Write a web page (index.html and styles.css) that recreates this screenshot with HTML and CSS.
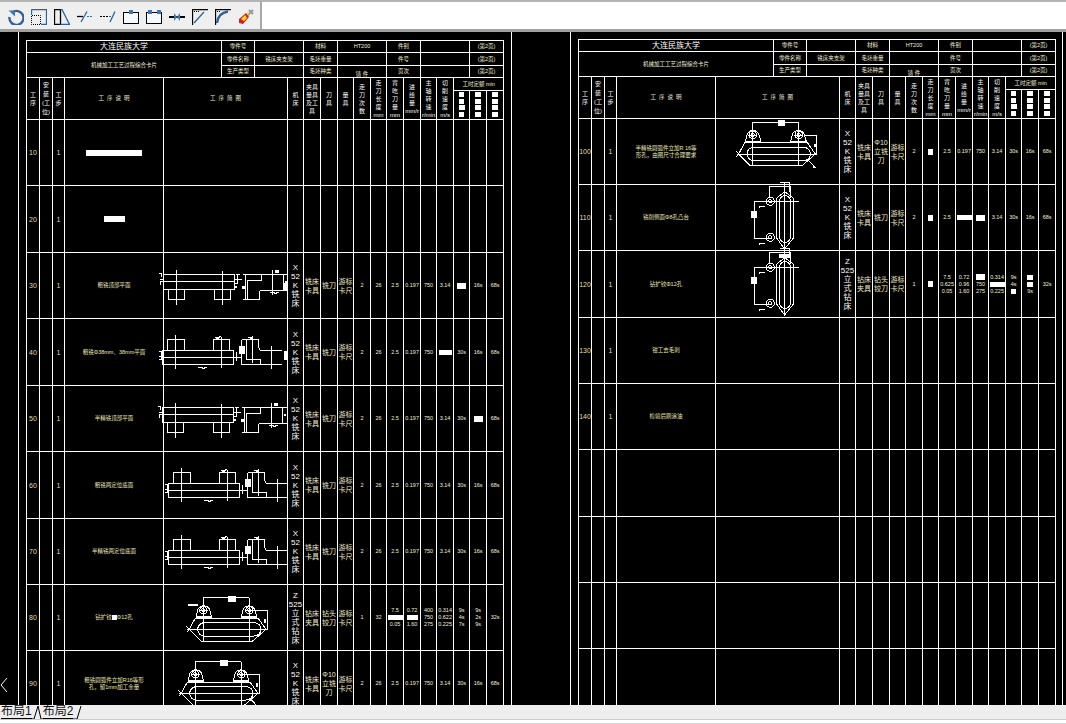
FILE: index.html
```html
<!DOCTYPE html>
<html lang="zh">
<head>
    <meta charset="UTF-8">
    <title>布局1</title>
    <link rel="stylesheet" href="styles.css">
</head>
<body>

    <!-- Shared drawings, in 1/3 px units local to a figure cell -->
    <svg class="defs" width="0" height="0">
        <defs>
            <g id="plan-low" class="part">
                <rect x="-6" y="64" width="215" height="46"/>
                <path d="M-6 85H209M9 110V140H59V110M148 110V140H197V110M34 52V155M172 55V155"/>
                <path d="M-18 62H-10V72M-14 95V84H-6M-14 80H-6M213 65H224M218 65V92H209M209 78H232"/>
                <path d="M241 64V140M234 64H371V112M234 140H284V115L288 112H371M246 82H288V64M246 82V140M322 50V125M354 64V112"/>
                <path d="M316 117H326L329 121H335V117H341"/>
                <rect class="solid" x="231" y="98" width="10" height="10"/>
                <rect class="solid" x="330" y="52" width="12" height="8"/>
                <rect class="solid" x="360" y="84" width="6" height="6"/>
                <rect class="solid" x="209" y="98" width="8" height="8"/>
            </g>
            <g id="plan-high" class="part">
                <rect x="13" y="94" width="214" height="43"/>
                <path d="M13 115H227M28 94V62H78V90L81 94M166 94V62H215V94M52 49V149M190 54V147"/>
                <path d="M3 97H9V110M3 122H9V112M3 112H13M236 100V125M227 115H248"/>
                <path d="M251 62H302V86L306 94H371M251 62V137H371M266 62V120H306V137M283 52V132M340 82V149"/>
                <path d="M121 144H131L134 148H140V144H146M171 54L178 58L188 52M271 54L278 58L286 52"/>
                <rect class="solid" x="243" y="82" width="18" height="23"/>
                <rect class="solid" x="175" y="54" width="8" height="8"/>
                <rect class="solid" x="275" y="54" width="8" height="8"/>
            </g>
            <g id="bracket" class="part">
                <path d="M118 38H256M118 38V168M256 38V168"/>
                <path d="M96 96L102 72A20 20 0 0 1 136 72L143 96M232 96L238 72A20 20 0 0 1 272 72L279 96"/>
                <circle cx="118" cy="76" r="11"/>
                <circle cx="118" cy="76" r="5"/>
                <circle cx="256" cy="76" r="11"/>
                <circle cx="256" cy="76" r="5"/>
                <path d="M104 76H132M242 76H270"/>
                <path d="M76 133L94 99H282L306 133L266 168H111Z"/>
                <rect x="101" y="113" width="190" height="40" rx="20"/>
                <path d="M70 133H312M68 124L76 133L68 142M271 76H311V133"/>
                <rect class="solid" x="193" y="32" width="23" height="18"/>
                <rect class="solid" x="96" y="93" width="47" height="6"/>
                <rect class="solid" x="232" y="93" width="47" height="6"/>
                <rect class="solid" x="301" y="103" width="6" height="10"/>
            </g>
            <g id="bracket-side" class="part">
                <path d="M206 20L233 40V158L206 192L181 158V40Z"/>
                <rect x="191" y="32" width="32" height="140" rx="16"/>
                <path d="M206 -8V192M115 49H250M115 159H165M115 49V159"/>
                <path d="M160 5H223V39M160 5V35M191 -8H221V22"/>
                <circle cx="163" cy="49" r="12"/>
                <circle cx="163" cy="49" r="5"/>
                <circle cx="163" cy="157" r="12"/>
                <circle cx="163" cy="157" r="5"/>
                <path d="M128 67L138 63H148M128 178L138 174H148"/>
                <rect class="solid" x="106" y="77" width="17" height="22"/>
            </g>
        </defs>
    </svg>

    <!-- Toolbar -->
    <header class="topbar">
        <div class="toolbar">
            <svg class="tool" viewBox="0 0 16 16"><path class="blue-thick" d="M4 3.5A7 7 0 1 1 1.5 8"/><path class="blue-fill" d="M0.5 1.5H7V7.5Z"/></svg>
            <svg class="tool" viewBox="0 0 16 16"><path class="blue-line" d="M0.5 0.5H15.5V15.5H10"/><path class="blue-line" d="M0.5 0.5V6"/><path class="dots" d="M0.5 7V15.5H9.5V6.5H1"/></svg>
            <svg class="tool" viewBox="0 0 16 16"><path class="black-line" d="M0.5 0.5H6.5V15.5H0.5Z"/><path class="blue-line" d="M6.5 0.5H8L15.5 15.5H6.5"/></svg>
            <svg class="tool" viewBox="0 0 16 16"><path class="black-line" d="M0 7.5H6"/><path class="blue-line" d="M10 2.5L4 13"/><path class="blue-dash" d="M10 7.5H16"/></svg>
            <svg class="tool" viewBox="0 0 16 16"><path class="black-dash" d="M0 7.5H9"/><path class="blue-line" d="M15 2.5L10 13"/><path class="blue-dash" d="M9 7.5H13"/></svg>
            <svg class="tool" viewBox="0 0 16 16"><rect class="black-box" x="0.5" y="3.5" width="15" height="11"/><rect class="blue-fill" x="6" y="1" width="4" height="4"/></svg>
            <svg class="tool" viewBox="0 0 16 16"><rect class="black-box" x="0.5" y="3.5" width="15" height="11"/><rect class="blue-fill" x="2" y="1" width="4" height="4"/><rect class="blue-fill" x="11" y="1" width="4" height="4"/></svg>
            <svg class="tool" viewBox="0 0 16 16"><path class="black-thick" d="M0 8H16"/><path class="blue-fill" d="M5 4L8 8L5 12ZM11 4L8 8L11 12Z"/></svg>
            <svg class="tool" viewBox="0 0 16 16"><path class="black-line" d="M0.5 16V0.5H16"/><path class="blue-line" d="M2 14L12 3"/><path class="dots" d="M2 2.5H7"/></svg>
            <svg class="tool" viewBox="0 0 16 16"><path class="black-line" d="M0.5 16V0.5H16"/><path class="blue-thick" d="M2 14Q3 4 13 2.5"/><path class="dots" d="M2 2.5H5"/></svg>
            <svg class="tool" viewBox="0 0 16 16"><path class="gray-burst" d="M9 7L15 1M11 1L15 5"/><path class="red-burst" d="M1 10L8 4L11 8L5 15L1 14Z"/><path class="yellow-burst" d="M3 10L7 6L9 9L6 12ZM9 3L11 5L9 6Z"/></svg>
        </div>
    </header>

    <!-- Drawing area -->
    <main class="canvas">
        <section class="sheet">
            <table class="card-table">
                <colgroup>
                    <col class="w13"><col class="w13"><col class="w12"><col class="w99"><col class="w58"><col class="w33"><col class="w33">
                    <col class="w16"><col class="w17"><col class="w17"><col class="w16"><col class="w17"><col class="w16"><col class="w17"><col class="w17"><col class="w16"><col class="w17"><col class="w16"><col class="w17"><col class="w17">
                </colgroup>
                <tr class="h12">
                    <td colspan="5" class="school">大连民族大学</td>
                    <td>零件号</td><td colspan="2"></td>
                    <td colspan="2">材料</td><td colspan="3">HT200</td><td colspan="2">件别</td><td colspan="3"></td><td colspan="2">(第2页)</td>
                </tr>
                <tr class="h13">
                    <td colspan="5" rowspan="2">机械加工工艺过程综合卡片</td>
                    <td>零件名称</td><td colspan="2">铣床夹支架</td>
                    <td colspan="2">毛坯重量</td><td colspan="3"></td><td colspan="2">件号</td><td colspan="3"></td><td colspan="2">(第2页)</td>
                </tr>
                <tr class="h12">
                    <td>生产类型</td><td colspan="2"></td>
                    <td colspan="2">毛坯种类</td><td colspan="3" class="low">铸 件</td><td colspan="2">页次</td><td colspan="3"></td><td colspan="2">(第2页)</td>
                </tr>
                <tr class="h13">
                    <td rowspan="2" class="head">工<br>序</td>
                    <td rowspan="2" class="head tight">安<br>装<br>(工<br>位)</td>
                    <td rowspan="2" class="head">工<br>步</td>
                    <td rowspan="2">工&nbsp;&nbsp;序&nbsp;&nbsp;说&nbsp;&nbsp;明</td>
                    <td rowspan="2" colspan="3">工&nbsp;&nbsp;序&nbsp;&nbsp;简&nbsp;&nbsp;图</td>
                    <td rowspan="2" class="head">机<br>床</td>
                    <td rowspan="2" class="head">夹具<br>量具<br>及工<br>具</td>
                    <td rowspan="2" class="head">刀<br>具</td>
                    <td rowspan="2" class="head">量<br>具</td>
                    <td rowspan="2" class="head">走<br>刀<br>次<br>数</td>
                    <td rowspan="2" class="head">走<br>刀<br>长<br>度<br>mm</td>
                    <td rowspan="2" class="head">背<br>吃<br>刀<br>量<br>mm</td>
                    <td rowspan="2" class="head">进<br>给<br>量<br>mm/r</td>
                    <td rowspan="2" class="head">主<br>轴<br>转<br>速<br>r/min</td>
                    <td rowspan="2" class="head">切<br>削<br>速<br>度<br>m/s</td>
                    <td colspan="3">工时定额 min</td>
                </tr>
                <tr class="h29">
                    <td class="head"><span class="blk s5"></span><span class="blk s5"></span><span class="blk s6"></span><span class="blk s5"></span></td>
                    <td class="head"><span class="blk s6"></span><span class="blk s6"></span><span class="blk s6"></span><span class="blk s6"></span></td>
                    <td class="head"><span class="blk s6"></span><span class="blk s6"></span><span class="blk s6"></span><span class="blk s6"></span></td>
                </tr>
                <tr class="h66">
                    <td class="no">10</td><td></td><td class="no">1</td><td><span class="blk bar-long"></span></td><td colspan="3"></td>
                    <td></td><td></td><td></td><td></td><td></td><td></td><td></td><td></td><td></td><td></td><td></td><td></td><td></td>
                </tr>
                <tr class="h67">
                    <td class="no">20</td><td></td><td class="no">1</td><td><span class="blk bar-short"></span></td><td colspan="3"></td>
                    <td></td><td></td><td></td><td></td><td></td><td></td><td></td><td></td><td></td><td></td><td></td><td></td><td></td>
                </tr>
                <tr class="h66">
                    <td class="no">30</td><td></td><td class="no">1</td><td class="desc">粗铣顶部平面</td>
                    <td colspan="3" class="fig"><svg viewBox="0 0 372 192"><clipPath id="cut-30"><rect x="-30" y="-30" width="402" height="260"/></clipPath><g clip-path="url(#cut-30)"><use href="#plan-low" x="3"/></g><rect class="solid" x="359" y="89" width="12" height="23"/></svg></td>
                    <td class="tall">X<br>52<br>K<br>铣<br>床</td><td class="cjk">铣床<br>卡具</td><td class="cjk">铣刀</td><td class="cjk">游标<br>卡尺</td>
                    <td>2</td><td>26</td><td>2.5</td><td>0.197</td><td>750</td><td>3.14</td><td><span class="blk m9"></span></td><td>16s</td><td>68s</td>
                </tr>
                <tr class="h67">
                    <td class="no">40</td><td></td><td class="no">1</td><td class="desc">粗铣Φ38mm、38mm平面</td>
                    <td colspan="3" class="fig"><svg viewBox="0 0 372 192"><clipPath id="cut-40"><rect x="-30" y="-30" width="402" height="260"/></clipPath><g clip-path="url(#cut-40)"><use href="#plan-high" x="-18"/></g><rect class="solid" x="359" y="96" width="12" height="28"/></svg></td>
                    <td class="tall">X<br>52<br>K<br>铣<br>床</td><td class="cjk">铣床<br>卡具</td><td class="cjk">铣刀</td><td class="cjk">游标<br>卡尺</td>
                    <td>2</td><td>26</td><td>2.5</td><td>0.197</td><td>750</td><td><span class="blk w13"></span></td><td>30s</td><td>16s</td><td>68s</td>
                </tr>
                <tr class="h66">
                    <td class="no">50</td><td></td><td class="no">1</td><td class="desc">半精铣顶部平面</td>
                    <td colspan="3" class="fig"><svg viewBox="0 0 372 192"><use href="#plan-low"/></svg></td>
                    <td class="tall">X<br>52<br>K<br>铣<br>床</td><td class="cjk">铣床<br>卡具</td><td class="cjk">铣刀</td><td class="cjk">游标<br>卡尺</td>
                    <td>2</td><td>26</td><td>2.5</td><td>0.197</td><td>750</td><td>3.14</td><td>30s</td><td><span class="blk m9"></span></td><td>68s</td>
                </tr>
                <tr class="h67">
                    <td class="no">60</td><td></td><td class="no">1</td><td class="desc">粗铣两定位底面</td>
                    <td colspan="3" class="fig"><svg viewBox="0 0 372 192"><use href="#plan-high"/></svg></td>
                    <td class="tall">X<br>52<br>K<br>铣<br>床</td><td class="cjk">铣床<br>卡具</td><td class="cjk">铣刀</td><td class="cjk">游标<br>卡尺</td>
                    <td>2</td><td>26</td><td>2.5</td><td>0.197</td><td>750</td><td>3.14</td><td>30s</td><td>16s</td><td>68s</td>
                </tr>
                <tr class="h66">
                    <td class="no">70</td><td></td><td class="no">1</td><td class="desc">半精铣两定位底面</td>
                    <td colspan="3" class="fig"><svg viewBox="0 0 372 192"><use href="#plan-high"/></svg></td>
                    <td class="tall">X<br>52<br>K<br>铣<br>床</td><td class="cjk">铣床<br>卡具</td><td class="cjk">铣刀</td><td class="cjk">游标<br>卡尺</td>
                    <td>2</td><td>26</td><td>2.5</td><td>0.197</td><td>750</td><td>3.14</td><td>30s</td><td>16s</td><td>68s</td>
                </tr>
                <tr class="h66">
                    <td class="no">80</td><td></td><td class="no">1</td><td class="desc">钻扩铰<span class="blk s5 inline"></span>Φ12孔</td>
                    <td colspan="3" class="fig"><svg viewBox="0 0 372 192"><use href="#bracket"/><rect class="solid" x="73" y="56" width="28" height="6"/></svg></td>
                    <td class="tall">Z<br>525<br>立<br>式<br>钻<br>床</td><td class="cjk">钻床<br>夹具</td><td class="cjk">钻头<br>铰刀</td><td class="cjk">游标<br>卡尺</td>
                    <td>1</td><td>32</td>
                    <td class="stack">7.5<br><span class="blk w15"></span><br>0.05</td>
                    <td class="stack">0.72<br><span class="blk m11"></span><br>1.60</td>
                    <td class="stack">400<br>750<br>275</td>
                    <td class="stack">0.314<br>0.622<br>0.225</td>
                    <td class="stack">9s<br>4s<br>7s</td>
                    <td class="stack">9s<br>2s<br>9s</td>
                    <td>32s</td>
                </tr>
                <tr class="h66">
                    <td class="no">90</td><td></td><td class="no">1</td><td class="desc">粗铣圆弧件立加R16等形<br>孔，留1mm加工余量</td>
                    <td colspan="3" class="fig"><svg viewBox="0 0 372 192"><use href="#bracket" x="-24" y="-6"/><path class="part" d="M262 146L282 168"/></svg></td>
                    <td class="tall">X<br>52<br>K<br>铣<br>床</td><td class="cjk">铣床<br>卡具</td><td class="cjk">Φ10<br>立铣<br>刀</td><td class="cjk">游标<br>卡尺</td>
                    <td>2</td><td>26</td><td>2.5</td><td>0.197</td><td>750</td><td>3.14</td><td>30s</td><td>16s</td><td>68s</td>
                </tr>
            </table>
        </section>

        <section class="sheet sheet-right">
            <table class="card-table">
                <colgroup>
                    <col class="w13"><col class="w13"><col class="w12"><col class="w99"><col class="w58"><col class="w33"><col class="w33">
                    <col class="w16"><col class="w17"><col class="w17"><col class="w16"><col class="w17"><col class="w16"><col class="w17"><col class="w17"><col class="w16"><col class="w17"><col class="w16"><col class="w17"><col class="w17">
                </colgroup>
                <tr class="h12">
                    <td colspan="5" class="school">大连民族大学</td>
                    <td>零件号</td><td colspan="2"></td>
                    <td colspan="2">材料</td><td colspan="3">HT200</td><td colspan="2">件别</td><td colspan="3"></td><td colspan="2">(第2页)</td>
                </tr>
                <tr class="h13">
                    <td colspan="5" rowspan="2">机械加工工艺过程综合卡片</td>
                    <td>零件名称</td><td colspan="2">铣床夹支架</td>
                    <td colspan="2">毛坯重量</td><td colspan="3"></td><td colspan="2">件号</td><td colspan="3"></td><td colspan="2">(第2页)</td>
                </tr>
                <tr class="h12">
                    <td>生产类型</td><td colspan="2"></td>
                    <td colspan="2">毛坯种类</td><td colspan="3" class="low">铸 件</td><td colspan="2">页次</td><td colspan="3"></td><td colspan="2">(第2页)</td>
                </tr>
                <tr class="h13">
                    <td rowspan="2" class="head">工<br>序</td>
                    <td rowspan="2" class="head tight">安<br>装<br>(工<br>位)</td>
                    <td rowspan="2" class="head">工<br>步</td>
                    <td rowspan="2">工&nbsp;&nbsp;序&nbsp;&nbsp;说&nbsp;&nbsp;明</td>
                    <td rowspan="2" colspan="3">工&nbsp;&nbsp;序&nbsp;&nbsp;简&nbsp;&nbsp;图</td>
                    <td rowspan="2" class="head">机<br>床</td>
                    <td rowspan="2" class="head">夹具<br>量具<br>及工<br>具</td>
                    <td rowspan="2" class="head">刀<br>具</td>
                    <td rowspan="2" class="head">量<br>具</td>
                    <td rowspan="2" class="head">走<br>刀<br>次<br>数</td>
                    <td rowspan="2" class="head">走<br>刀<br>长<br>度<br>mm</td>
                    <td rowspan="2" class="head">背<br>吃<br>刀<br>量<br>mm</td>
                    <td rowspan="2" class="head">进<br>给<br>量<br>mm/r</td>
                    <td rowspan="2" class="head">主<br>轴<br>转<br>速<br>r/min</td>
                    <td rowspan="2" class="head">切<br>削<br>速<br>度<br>m/s</td>
                    <td colspan="3">工时定额 min</td>
                </tr>
                <tr class="h29">
                    <td class="head"><span class="blk s5"></span><span class="blk s5"></span><span class="blk s6"></span><span class="blk s5"></span></td>
                    <td class="head"><span class="blk s6"></span><span class="blk s6"></span><span class="blk s6"></span><span class="blk s6"></span></td>
                    <td class="head"><span class="blk s6"></span><span class="blk s6"></span><span class="blk s6"></span><span class="blk s6"></span></td>
                </tr>
                <tr class="h66">
                    <td class="no">100</td><td></td><td class="no">1</td><td class="desc">半精铣圆弧件立加R 16等<br>形孔，由图尺寸合理要求</td>
                    <td colspan="3" class="fig"><svg viewBox="0 0 372 192"><use href="#bracket" x="-8" y="-28"/><path class="part" d="M278 124L298 146"/><rect class="solid" x="292" y="140" width="6" height="6"/></svg></td>
                    <td class="tall">X<br>52<br>K<br>铣<br>床</td><td class="cjk">铣床<br>卡具</td><td class="cjk">Φ10<br>立铣<br>刀</td><td class="cjk">游标<br>卡尺</td>
                    <td>2</td><td><span class="blk s5 tall-blk"></span></td><td>2.5</td><td>0.197</td><td>750</td><td>3.14</td><td>30s</td><td>16s</td><td>68s</td>
                </tr>
                <tr class="h66">
                    <td class="no">110</td><td></td><td class="no">1</td><td class="desc">铣削侧面Φ8孔凸台</td>
                    <td colspan="3" class="fig"><svg viewBox="0 0 372 192"><use href="#bracket-side"/></svg></td>
                    <td class="tall">X<br>52<br>K<br>铣<br>床</td><td class="cjk">铣床<br>卡具</td><td class="cjk">铣刀</td><td class="cjk">游标<br>卡尺</td>
                    <td>2</td><td><span class="blk s5 tall-blk"></span></td><td>2.5</td><td><span class="blk w15"></span></td><td><span class="blk m9"></span></td><td>3.14</td><td>30s</td><td>16s</td><td>68s</td>
                </tr>
                <tr class="h67">
                    <td class="no">120</td><td></td><td class="no">1</td><td class="desc">钻扩铰Φ12孔</td>
                    <td colspan="3" class="fig"><svg viewBox="0 0 372 192"><use href="#bracket-side"/><rect class="solid" x="190" y="10" width="32" height="10"/></svg></td>
                    <td class="tall">Z<br>525<br>立<br>式<br>钻<br>床</td><td class="cjk">钻床<br>夹具</td><td class="cjk">钻头<br>铰刀</td><td class="cjk">游标<br>卡尺</td>
                    <td>1</td><td><span class="blk s5 tall-blk"></span></td>
                    <td class="stack">7.5<br>0.625<br>0.05</td>
                    <td class="stack">0.72<br>0.96<br>1.60</td>
                    <td class="stack"><span class="blk m9"></span><br>750<br>275</td>
                    <td class="stack">0.314<br><span class="blk w15"></span><br>0.225</td>
                    <td class="stack">9s<br>4s<br><span class="blk s5"></span></td>
                    <td class="stack"><span class="blk s6"></span><br><span class="blk s6"></span><br>9s</td>
                    <td>32s</td>
                </tr>
                <tr class="h66">
                    <td class="no">130</td><td></td><td class="no">1</td><td class="desc">钳工去毛刺</td><td colspan="3"></td>
                    <td></td><td></td><td></td><td></td><td></td><td></td><td></td><td></td><td></td><td></td><td></td><td></td><td></td>
                </tr>
                <tr class="h66">
                    <td class="no">140</td><td></td><td class="no">1</td><td class="desc">检验后刷涂油</td><td colspan="3"></td>
                    <td></td><td></td><td></td><td></td><td></td><td></td><td></td><td></td><td></td><td></td><td></td><td></td><td></td>
                </tr>
                <tr class="h67">
                    <td></td><td></td><td></td><td></td><td colspan="3"></td>
                    <td></td><td></td><td></td><td></td><td></td><td></td><td></td><td></td><td></td><td></td><td></td><td></td><td></td>
                </tr>
                <tr class="h66">
                    <td></td><td></td><td></td><td></td><td colspan="3"></td>
                    <td></td><td></td><td></td><td></td><td></td><td></td><td></td><td></td><td></td><td></td><td></td><td></td><td></td>
                </tr>
                <tr class="h66">
                    <td></td><td></td><td></td><td></td><td colspan="3"></td>
                    <td></td><td></td><td></td><td></td><td></td><td></td><td></td><td></td><td></td><td></td><td></td><td></td><td></td>
                </tr>
                <tr class="h66">
                    <td></td><td></td><td></td><td></td><td colspan="3"></td>
                    <td></td><td></td><td></td><td></td><td></td><td></td><td></td><td></td><td></td><td></td><td></td><td></td><td></td>
                </tr>
            </table>
        </section>

        <!-- Cross-hair tail at the lower left corner -->
        <svg class="ucs" viewBox="0 0 8 16"><path d="M7 1L1 8L7 15"/></svg>
    </main>

    <!-- Layout tabs -->
    <footer class="tabbar">
        <div class="tabs">
            <span class="tab">布局1</span>
            <svg class="slant" viewBox="0 0 11 14"><path d="M0 14H2L6 1L9 14H11"/></svg>
            <span class="tab">布局2</span>
            <svg class="slant slant-end" viewBox="0 0 9 14"><path d="M0 14H4L8 1"/></svg>
        </div>
    </footer>

</body>
</html>
```

FILE: styles.css
```css
/* Reset */
* {
    margin: 0;
    padding: 0;
    box-sizing: border-box;
}

body {
    width: 1066px;
    height: 724px;
    display: flex;
    flex-direction: column;
    overflow: hidden;
    background: #000;
    font-family: "Liberation Sans", "Noto Sans CJK SC", sans-serif;
}

.defs {
    position: absolute;
}

/* Toolbar */
.topbar {
    height: 32px;
    flex: none;
    background: #fff;
    border-top: 2px solid #b4b4b4;
    border-bottom: 3px solid #a0a0a0;
}

.toolbar {
    width: 262px;
    height: 27px;
    display: flex;
    gap: 7px;
    padding: 7px 0 0 8px;
    background: #efefef;
    border-right: 2px solid #a8a8a8;
}

.tool {
    width: 16px;
    height: 16px;
    flex: none;
    fill: none;
}

.blue-thick { stroke: #2f6396; stroke-width: 2.4; }
.blue-line { stroke: #2a64a0; stroke-width: 1.3; }
.blue-dash { stroke: #2a6fb0; stroke-width: 1; stroke-dasharray: 2 1; }
.blue-fill { fill: #3f76ab; }
.black-line { stroke: #000; stroke-width: 1.3; }
.black-dash { stroke: #000; stroke-width: 1; stroke-dasharray: 2 1; }
.black-thick { stroke: #000; stroke-width: 2; }
.black-box { stroke: #000; stroke-width: 1; fill: #f7fafd; }
.dots { stroke: #000; stroke-width: 1; stroke-dasharray: 1 1; }
.gray-burst { stroke: #999; stroke-width: 2; }
.red-burst { fill: #d42020; }
.yellow-burst { fill: #ffd92e; }

/* Drawing area */
.canvas {
    flex: 1;
    display: flex;
    min-height: 0;
    overflow: hidden;
    position: relative;
    padding-left: 18px;
    background: #000;
}

.sheet {
    width: 494px;
    padding: 8px 0 0 7px;
    border-left: 1px solid #fff;
    border-right: 1px solid #fff;
}

.sheet-right {
    width: 493px;
    margin-left: 58px;
    padding-top: 7px;
}

/* Process card */
.card-table {
    width: 477px;
    table-layout: fixed;
    border-collapse: collapse;
    color: #f4f0dc;
    font-size: 5.5px;
    line-height: 7px;
    text-align: center;
}

.card-table td {
    border: 1px solid #fff;
    overflow: visible;
    white-space: nowrap;
}

.w12 { width: 12px; }
.w13 { width: 13px; }
.w16 { width: 16px; }
.w17 { width: 17px; }
.w33 { width: 33px; }
.w58 { width: 58px; }
.w99 { width: 99px; }

.h12 { height: 12px; }
.h13 { height: 13px; }
.h29 { height: 29px; }
.h66 { height: 66px; }
.h67 { height: 67px; }

.school {
    font-size: 8px;
    color: #fff;
}

.low {
    vertical-align: bottom;
    line-height: 5px;
}

.head {
    font-size: 6px;
    line-height: 8px;
    color: #fff;
}

.tight {
    line-height: 9px;
}

.no {
    font-size: 7px;
    color: #e6dfa6;
}

.desc {
    font-size: 5.5px;
    color: #ece6b8;
}

.tall {
    font-size: 8px;
    line-height: 9px;
    color: #fff;
}

.cjk {
    font-size: 7px;
    line-height: 9px;
    color: #f0eacc;
}

.stack {
    line-height: 7px;
}

/* Covered-up values */
.blk {
    display: block;
    margin: 0 auto;
    background: #fff;
    height: 5px;
}

.head .blk {
    margin-bottom: 1.5px;
}

.stack .blk {
    display: inline-block;
    vertical-align: middle;
}

.inline {
    display: inline-block;
    vertical-align: middle;
}

.s5 { width: 5px; }
.s6 { width: 6px; }
.m9 { width: 9px; height: 6px; }
.m11 { width: 11px; }
.w13.blk { width: 13px; }
.w15.blk { width: 15px; }
.tall-blk { height: 6px; }
.bar-long { width: 56px; height: 6px; }
.bar-short { width: 21px; height: 6px; }

/* Part sketches */
.fig {
    vertical-align: top;
}

.fig svg {
    display: block;
    width: 124px;
    height: 64px;
    overflow: visible;
}

.part,
.part * {
    fill: none;
    stroke: #fff;
    stroke-width: 3;
    shape-rendering: crispEdges;
}

.part .solid,
.solid {
    fill: #fff;
    stroke: none;
    shape-rendering: crispEdges;
}

.ucs {
    position: absolute;
    left: 0;
    bottom: 12px;
    width: 8px;
    height: 16px;
    fill: none;
    stroke: #fff;
    stroke-width: 1;
}

/* Layout tabs */
.tabbar {
    height: 19px;
    flex: none;
    background: #fff;
    border-bottom: 1px solid #d8d8d8;
}

.tabs {
    height: 15px;
    display: flex;
    align-items: flex-end;
    background: #eee;
    border-bottom: 1px solid #ccc;
    padding-left: 1px;
}

.tab {
    height: 15px;
    font-size: 12px;
    line-height: 14px;
    color: #111;
    border-bottom: 1px solid #000;
}

.slant {
    width: 11px;
    height: 14px;
    flex: none;
    fill: none;
    stroke: #000;
    stroke-width: 1;
}

.slant-end {
    width: 9px;
}
```
